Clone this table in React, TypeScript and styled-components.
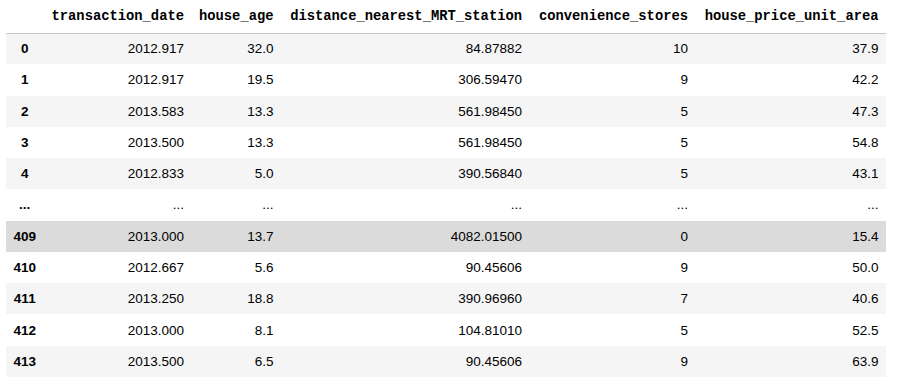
import { FC } from "react";
import styled, { createGlobalStyle } from "styled-components";

const GlobalStyle = createGlobalStyle`
  html, body {
    margin: 0;
    padding: 0;
    background: #ffffff;
  }
`;

const Wrapper = styled.div`
  padding: 0 0 0 6px;
  background: #ffffff;
`;

const Table = styled.table`
  border-collapse: collapse;
  table-layout: fixed;
  width: 880px;
  font-family: "Liberation Sans", Arial, Helvetica, sans-serif;
  font-size: 13.5px;
  color: #000;
`;

const HeadRow = styled.tr`
  height: 33px;
  border-bottom: 1px solid #c4c4c4;
`;

const HeadCell = styled.th`
  font-family: "Liberation Mono", "Courier New", monospace;
  font-weight: bold;
  font-size: 13.8px;
  text-align: right;
  padding: 0 7.5px;
  white-space: nowrap;
  vertical-align: middle;
`;

const Row = styled.tr<{ $striped: boolean; $highlighted?: boolean }>`
  height: 31.27px;
  background: ${(p) =>
    p.$highlighted ? "#dbdbdb" : p.$striped ? "#f5f5f5" : "#ffffff"};
`;

const IndexCell = styled.th`
  font-weight: bold;
  text-align: center;
  padding: 0;
  vertical-align: middle;
`;

const Cell = styled.td`
  text-align: right;
  padding: 0 7.5px;
  white-space: nowrap;
  vertical-align: middle;
`;

const columns = [
  "transaction_date",
  "house_age",
  "distance_nearest_MRT_station",
  "convenience_stores",
  "house_price_unit_area",
];

const widths = [37.5, 148, 89.5, 248.5, 166, 190.5];

type DataRow = { index: string; values: string[]; highlighted?: boolean };

const rows: DataRow[] = [
  { index: "0", values: ["2012.917", "32.0", "84.87882", "10", "37.9"] },
  { index: "1", values: ["2012.917", "19.5", "306.59470", "9", "42.2"] },
  { index: "2", values: ["2013.583", "13.3", "561.98450", "5", "47.3"] },
  { index: "3", values: ["2013.500", "13.3", "561.98450", "5", "54.8"] },
  { index: "4", values: ["2012.833", "5.0", "390.56840", "5", "43.1"] },
  { index: "...", values: ["...", "...", "...", "...", "..."] },
  { index: "409", values: ["2013.000", "13.7", "4082.01500", "0", "15.4"], highlighted: true },
  { index: "410", values: ["2012.667", "5.6", "90.45606", "9", "50.0"] },
  { index: "411", values: ["2013.250", "18.8", "390.96960", "7", "40.6"] },
  { index: "412", values: ["2013.000", "8.1", "104.81010", "5", "52.5"] },
  { index: "413", values: ["2013.500", "6.5", "90.45606", "9", "63.9"] },
];

const DataFrame: FC = () => {
  return (
    <Table>
      <colgroup>
        {widths.map((w, i) => (
          <col key={i} style={{ width: w }} />
        ))}
      </colgroup>
      <thead>
        <HeadRow>
          <HeadCell></HeadCell>
          {columns.map((c) => (
            <HeadCell key={c}>{c}</HeadCell>
          ))}
        </HeadRow>
      </thead>
      <tbody>
        {rows.map((r, i) => (
          <Row key={r.index} $striped={i % 2 === 0} $highlighted={r.highlighted}>
            <IndexCell>{r.index}</IndexCell>
            {r.values.map((v, j) => (
              <Cell key={j}>{v}</Cell>
            ))}
          </Row>
        ))}
      </tbody>
    </Table>
  );
};

export default function App() {
  return (
    <Wrapper>
      <GlobalStyle />
      <DataFrame />
    </Wrapper>
  );
}
